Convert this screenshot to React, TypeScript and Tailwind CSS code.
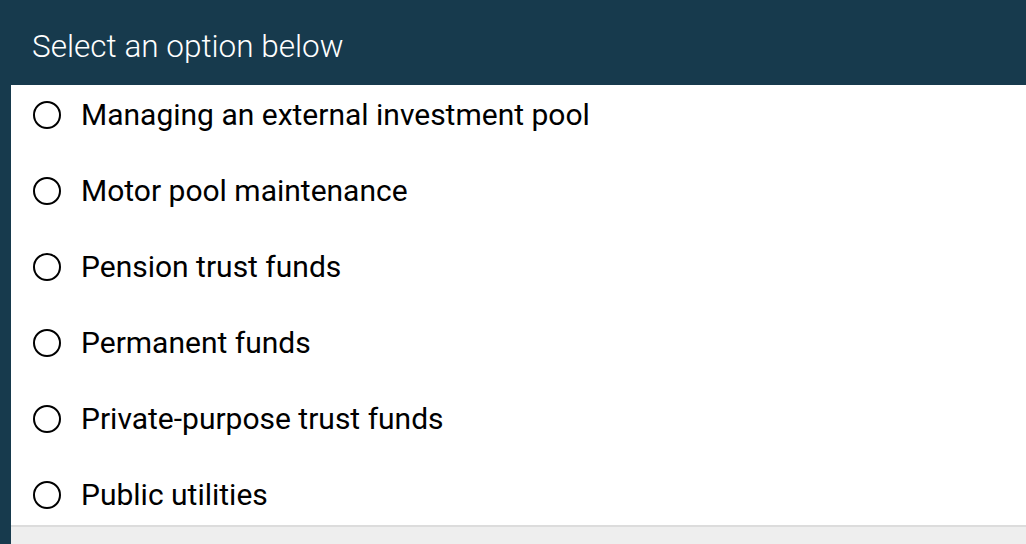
const options = [
  "Managing an external investment pool",
  "Motor pool maintenance",
  "Pension trust funds",
  "Permanent funds",
  "Private-purpose trust funds",
  "Public utilities",
];

export default function App() {
  return (
    <div className="h-[544px] w-[1026px] overflow-hidden bg-[#173a4d] pl-[11px] font-['Roboto',sans-serif]">
      <div className="flex h-full flex-col">
        <header className="-ml-[11px] flex h-[85px] shrink-0 items-start bg-[#173a4d] pl-8 pt-[27px]">
          <h1 className="text-[31.5px] font-light leading-[40px] text-white">Select an option below</h1>
        </header>
        <div className="h-[440px] shrink-0 overflow-hidden bg-white">
          <ul className="-mt-2">
            {options.map((opt) => (
              <li key={opt} className="flex h-[76px] items-center gap-[20px] pl-[22px]">
                <span className="h-[28px] w-[28px] shrink-0 rounded-full border-2 border-black" />
                <span className="text-[30px] leading-none text-black">{opt}</span>
              </li>
            ))}
          </ul>
        </div>
        <div className="flex-1 border-t-2 border-[#dcdcdc] bg-[#eeeeee]" />
      </div>
    </div>
  );
}
